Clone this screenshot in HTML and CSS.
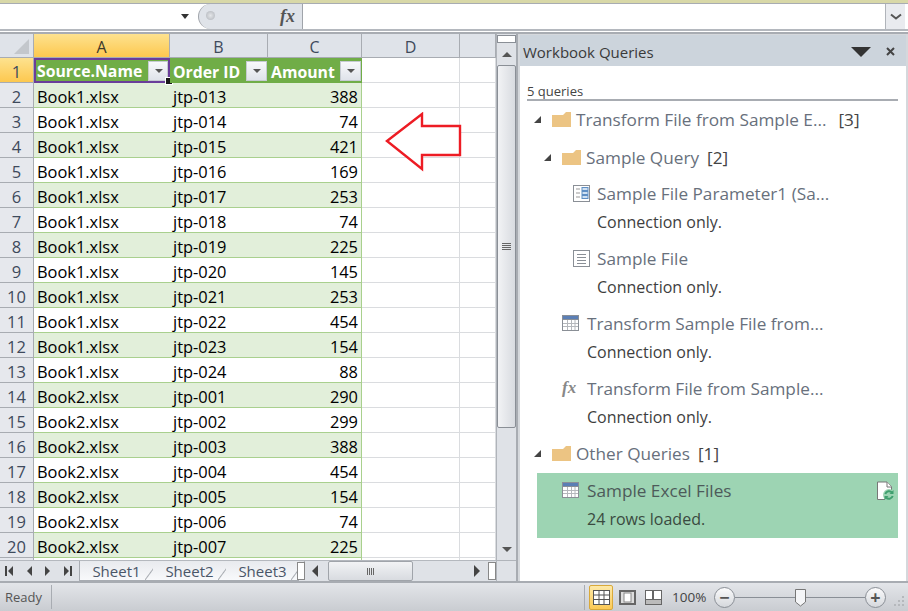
FILE: index.html
```html
<!DOCTYPE html>
<html lang="en">
<head>
  <meta charset="UTF-8">
  <title>Workbook Queries</title>
  <link rel="stylesheet" href="styles.css">
</head>
<body>
  <div class="formula-bar">
    <div class="name-box"><span class="name-arrow"></span></div>
    <div class="fx-box">
      <span class="fx-knob"></span>
      <span class="fx-label">fx</span>
    </div>
    <div class="formula-input"></div>
    <div class="formula-expand">
      <svg width="12" height="8" viewBox="0 0 12 8"><path d="M1 1.5 6 5.5 11 1.5" fill="none" stroke="#555" stroke-width="2"/></svg>
    </div>
  </div>

  <div class="main">
    <div class="sheet-area">
      <div class="sheet-left">
        <div class="grid-wrap">
          <div class="grid" id="grid"></div>
          <svg class="red-arrow" width="78" height="60" viewBox="0 0 78 60">
            <path d="M2 29 37 2V14H75V43H37V57Z" fill="#fff" stroke="#ed1c24" stroke-width="2.4"/>
          </svg>
        </div>
        <div class="tabs-bar">
          <div class="tab-nav">
            <svg width="74" height="12" viewBox="0 0 74 12" fill="#444">
              <path d="M5 1V11H7V1ZM13 1 8 6 13 11Z"/>
              <path d="M32 1 27 6 32 11Z"/>
              <path d="M45 1 50 6 45 11Z"/>
              <path d="M64 1 69 6 64 11ZM70 1V11H72V1Z"/>
            </svg>
          </div>
          <div class="tab">Sheet1</div>
          <div class="tab">Sheet2</div>
          <div class="tab">Sheet3</div>
          <div class="tab-split"></div>
          <div class="hscroll">
            <span class="tri-left"></span>
            <div class="hthumb"><span class="hgrip"></span></div>
            <span class="tri-right"></span>
          </div>
          <div class="tab-split end"></div>
        </div>
      </div>
      <div class="vscroll">
        <div class="splitter"></div>
        <div class="scroll-btn"><span class="tri-up"></span></div>
        <div class="scroll-thumb"><span class="grip"></span></div>
        <div class="scroll-track"></div>
        <div class="scroll-btn down"><span class="tri-down"></span></div>
        <div class="scroll-corner"></div>
      </div>
    </div>

    <aside class="pane">
      <div class="pane-head">
        <span class="pane-title">Workbook Queries</span>
        <span class="pane-menu"></span>
        <svg class="pane-close" width="9" height="9" viewBox="0 0 9 9"><path d="M1 1 8 8M8 1 1 8" stroke="#444" stroke-width="2"/></svg>
      </div>
      <div class="pane-body">
        <div class="count">5 queries</div>

        <div class="group g1">
          <span class="expander"></span>
          <svg class="folder" width="20" height="17" viewBox="0 0 20 17"><path d="M0 4H11L14 1H19V16H0Z" fill="#ecc483"/></svg>
          <span class="q-name">Transform File from Sample E...</span><span class="q-count wide">[3]</span>
        </div>

        <div class="group g2">
          <span class="expander"></span>
          <svg class="folder" width="20" height="17" viewBox="0 0 20 17"><path d="M0 4H11L14 1H19V16H0Z" fill="#ecc483"/></svg>
          <span class="q-name">Sample Query</span><span class="q-count">[2]</span>
        </div>

        <div class="query q-deep first">
          <svg class="q-icon" width="18" height="18" viewBox="0 0 18 18">
            <rect x=".5" y=".5" width="16" height="16" fill="#fff" stroke="#8a8f96"/>
            <path d="M3 4H7M3 8H7M3 12H7" stroke="#999"/>
            <rect x="9" y="2.5" width="6" height="3" fill="#cfe0f2" stroke="#5f8fc4"/>
            <rect x="9" y="6.5" width="6" height="3" fill="#cfe0f2" stroke="#5f8fc4"/>
            <rect x="9" y="10.5" width="6" height="3" fill="#cfe0f2" stroke="#5f8fc4"/>
          </svg>
          <div class="q-text">
            <div class="q-name">Sample File Parameter1 (Sa...</div>
            <div class="q-status">Connection only.</div>
          </div>
        </div>

        <div class="query q-deep">
          <svg class="q-icon" width="18" height="18" viewBox="0 0 18 18">
            <rect x=".5" y=".5" width="16" height="16" fill="#fff" stroke="#8a8f96"/>
            <path d="M4 4.5H13M4 7.5H13M4 10.5H13M4 13.5H13" stroke="#8a8f96"/>
          </svg>
          <div class="q-text">
            <div class="q-name">Sample File</div>
            <div class="q-status">Connection only.</div>
          </div>
        </div>

        <div class="query">
          <svg class="q-icon" width="17" height="16" viewBox="0 0 17 16">
            <rect width="17" height="16" fill="#8a8f96"/>
            <rect x="1" y="1" width="15" height="3" fill="#5b7fb5"/>
            <path d="M1 5H16V15H1Z" fill="#fff"/>
            <path d="M1 8.5H16M1 11.5H16M5.5 5V15M9.5 5V15M13 5V15" stroke="#b5b8bc"/>
          </svg>
          <div class="q-text">
            <div class="q-name">Transform Sample File from...</div>
            <div class="q-status">Connection only.</div>
          </div>
        </div>

        <div class="query">
          <span class="q-icon fx-icon">fx</span>
          <div class="q-text">
            <div class="q-name">Transform File from Sample...</div>
            <div class="q-status">Connection only.</div>
          </div>
        </div>

        <div class="group g1 other">
          <span class="expander"></span>
          <svg class="folder" width="20" height="17" viewBox="0 0 20 17"><path d="M0 4H11L14 1H19V16H0Z" fill="#ecc483"/></svg>
          <span class="q-name">Other Queries</span><span class="q-count">[1]</span>
        </div>

        <div class="query selected">
          <svg class="q-icon" width="17" height="16" viewBox="0 0 17 16">
            <rect width="17" height="16" fill="#8a8f96"/>
            <rect x="1" y="1" width="15" height="3" fill="#5b7fb5"/>
            <path d="M1 5H16V15H1Z" fill="#fff"/>
            <path d="M1 8.5H16M1 11.5H16M5.5 5V15M9.5 5V15M13 5V15" stroke="#b5b8bc"/>
          </svg>
          <div class="q-text">
            <div class="q-name">Sample Excel Files</div>
            <div class="q-status">24 rows loaded.</div>
          </div>
          <svg class="q-load" width="19" height="20" viewBox="0 0 19 20">
            <path d="M1.5 1H11L15.5 5.5V18.5H1.5Z" fill="#fff" stroke="#777"/>
            <path d="M11 1V6H15.5" fill="#fff" stroke="#777"/>
            <circle cx="13" cy="14" r="6" fill="#9dd4b3"/>
            <path d="M9.3 13A4 4 0 0 1 16 11.5M16.7 15A4 4 0 0 1 10 16.5" fill="none" stroke="#3f9f6e" stroke-width="2"/>
            <path d="M17.5 9V13H13.5ZM8.5 19V15H12.5Z" fill="#3f9f6e"/>
          </svg>
        </div>
      </div>
    </aside>
  </div>

  <div class="status-bar">
    <span class="status-ready">Ready</span>
    <div class="status-right">
      <span class="view-btn active">
        <svg width="17" height="15" viewBox="0 0 17 15"><rect width="17" height="15" fill="#555"/><path d="M1 1H16V14H1Z" fill="#fff"/><path d="M1 5H16M1 9.5H16M6 1V14M11 1V14" stroke="#555"/></svg>
      </span>
      <span class="view-btn">
        <svg width="17" height="15" viewBox="0 0 17 15"><rect width="17" height="15" fill="#666"/><rect x="2" y="2" width="13" height="11" fill="#ddd"/><rect x="5" y="3" width="7" height="9" fill="#fff" stroke="#888"/></svg>
      </span>
      <span class="view-btn">
        <svg width="17" height="15" viewBox="0 0 17 15"><rect width="17" height="15" fill="#666"/><rect x="1" y="1" width="6" height="8" fill="#fff"/><rect x="9" y="1" width="7" height="8" fill="#fff"/><rect x="1" y="10" width="15" height="4" fill="#bbb"/></svg>
      </span>
      <span class="zoom-pct">100%</span>
      <span class="zoom-btn">&minus;</span>
      <div class="zoom-track">
        <svg class="zoom-thumb" width="11" height="18" viewBox="0 0 11 18"><path d="M.5.5H10.5V13L5.5 17 .5 13Z" fill="#f4f5f7" stroke="#777"/></svg>
      </div>
      <span class="zoom-btn">+</span>
      <svg class="resize-grip" width="12" height="12" viewBox="0 0 12 12" fill="#b5b8bc"><path d="M9 1h2v2H9zM5 5h2v2H5zM9 5h2v2H9zM1 9h2v2H1zM5 9h2v2H5zM9 9h2v2H9z"/></svg>
    </div>
  </div>

  <script>
    const files = ['Book1.xlsx', 'Book2.xlsx'];
    const rows = [
      [0, 13, 388], [0, 14, 74], [0, 15, 421], [0, 16, 169], [0, 17, 253], [0, 18, 74],
      [0, 19, 225], [0, 20, 145], [0, 21, 253], [0, 22, 454], [0, 23, 154], [0, 24, 88],
      [1, 1, 290], [1, 2, 299], [1, 3, 388], [1, 4, 454], [1, 5, 154], [1, 6, 74], [1, 7, 225]
    ];
    const grid = document.getElementById('grid');

    function addCell(cls, text) {
      const cell = document.createElement('div');
      cell.className = cls;
      if (text !== undefined) cell.textContent = text;
      grid.appendChild(cell);
      return cell;
    }

    addCell('corner').innerHTML = '<span class="corner-tri"></span>';
    addCell('col-head on', 'A');
    addCell('col-head', 'B');
    addCell('col-head', 'C');
    addCell('col-head', 'D');
    addCell('col-head');

    addCell('row-head on', '1');
    ['Source.Name', 'Order ID', 'Amount'].forEach((name, i) => {
      const cell = addCell(i === 0 ? 'th active' : 'th', name);
      const btn = document.createElement('span');
      btn.className = 'filter';
      cell.appendChild(btn);
    });
    addCell('cell');
    addCell('cell');

    rows.forEach((row, i) => {
      const band = i % 2 === 0 ? ' band' : '';
      addCell('row-head', i + 2);
      addCell('cell t' + band, files[row[0]]);
      addCell('cell t' + band, 'jtp-' + String(row[1]).padStart(3, '0'));
      addCell('cell t num' + band, row[2]);
      addCell('cell');
      addCell('cell');
    });

    addCell('row-head');
    addCell('cell t');
    addCell('cell t');
    addCell('cell t num');
    addCell('cell');
    addCell('cell');
  </script>
</body>
</html>
```

FILE: styles.css
```css
* {
  box-sizing: border-box;
}

html, body {
  margin: 0;
  height: 100%;
  overflow: hidden;
}

body {
  width: 908px;
  height: 611px;
  display: flex;
  flex-direction: column;
  font-family: "Open Sans", "Noto Sans", sans-serif;
  background-color: #eef0f3;
  border-top: 3px solid #d8d8a8;
}

/* formula bar */
.formula-bar {
  height: 28px;
  display: flex;
  background-color: #fff;
  border-top: 1px solid #a8acb2;
  border-bottom: 2px solid #b4b8be;
  flex-shrink: 0;
}

.name-box {
  width: 198px;
  position: relative;
  background-color: #fff;
}

.name-arrow {
  position: absolute;
  left: 181px;
  top: 10px;
  border-left: 4px solid transparent;
  border-right: 4px solid transparent;
  border-top: 5px solid #333;
}

.fx-box {
  width: 105px;
  position: relative;
  background-color: #dfe3e9;
  border-left: 1px solid #a0a4aa;
  border-right: 1px solid #a0a4aa;
  border-radius: 13px 0 0 13px;
}

.fx-knob {
  position: absolute;
  left: 7px;
  top: 7px;
  width: 9px;
  height: 9px;
  border-radius: 50%;
  background: radial-gradient(#e4e6e9, #aeb2b8);
}

.fx-label {
  position: absolute;
  left: 81px;
  top: 0;
  font-family: "Liberation Serif", serif;
  font-style: italic;
  font-weight: bold;
  font-size: 18px;
  line-height: 24px;
  color: #555;
}

.formula-input {
  flex: 1;
}

.formula-expand {
  width: 20px;
  display: flex;
  align-items: center;
  justify-content: center;
  background-color: #e9ebef;
  border-left: 1px solid #b0b4ba;
  margin-right: 3px;
}

/* sheet and pane */
.main {
  flex: 1;
  min-height: 0;
  display: flex;
  border-top: 1px solid #fff;
  padding: 2px 0;
  background-color: #a8acb2;
}

.sheet-area {
  width: 518px;
  display: flex;
  border-right: 2px solid #a8acb2;
  background-color: #fff;
}

.sheet-left {
  width: 496px;
  display: flex;
  flex-direction: column;
}

.grid-wrap {
  flex: 1;
  min-height: 0;
  position: relative;
  overflow: hidden;
}

.grid {
  display: grid;
  grid-template-columns: 34px 136px 98px 94px 98px 36px;
  grid-template-rows: 24px repeat(21, 25px);
  font-size: 16.4px;
  color: #000;
}

.red-arrow {
  position: absolute;
  left: 385px;
  top: 78px;
}

.corner {
  background-color: #dfe3e9;
  border-right: 1px solid #a8acb2;
  border-bottom: 1px solid #a8acb2;
  position: relative;
}

.corner-tri {
  position: absolute;
  right: 4px;
  bottom: 3px;
  border-left: 15px solid transparent;
  border-bottom: 15px solid #c3c7cc;
}

.col-head {
  background-color: #dfe3e9;
  border-right: 1px solid #a8acb2;
  border-bottom: 1px solid #a8acb2;
  display: flex;
  align-items: center;
  justify-content: center;
  padding-top: 2px;
  font-size: 16px;
  color: #3e4a5c;
}

.col-head.on {
  background: linear-gradient(#fde28f, #fdc84f);
  color: #3e3a2c;
}

.row-head {
  background-color: #e6e8ed;
  border-right: 1px solid #a8acb2;
  border-bottom: 1px solid #a8acb2;
  display: flex;
  align-items: center;
  justify-content: center;
  padding-top: 2px;
  font-size: 16.5px;
  color: #3e4a5c;
}

.row-head.on {
  background: linear-gradient(#fde28f, #fdc84f);
}

.th {
  background-color: #70ad47;
  color: #fff;
  font-weight: bold;
  font-size: 15.8px;
  padding: 2px 0 0 3px;
  display: flex;
  align-items: center;
  position: relative;
  white-space: nowrap;
}

.th.active {
  outline: 2px solid #6a3d9a;
  outline-offset: -2px;
  border-bottom: 2px solid #2a1a3a;
}

.th.active::after {
  content: "";
  position: absolute;
  right: -3px;
  bottom: -4px;
  width: 6px;
  height: 6px;
  background-color: #1a1a1a;
  border: 1px solid #fff;
}

.filter {
  position: absolute;
  right: 1px;
  top: 3px;
  width: 21px;
  height: 20px;
  background: linear-gradient(#f8f9fb, #dfe3ea);
  border: 1px solid #c6cbd2;
}

.th.active .filter {
  right: 2px;
  width: 20px;
}

.filter::after {
  content: "";
  position: absolute;
  left: 6px;
  top: 7px;
  border-left: 4px solid transparent;
  border-right: 4px solid transparent;
  border-top: 4px solid #555;
}

.cell {
  border-right: 1px solid #dadcdf;
  border-bottom: 1px solid #dadcdf;
  background-color: #fff;
}

.cell.t {
  padding: 0 3px;
  line-height: 27px;
  border-right: 0;
  border-bottom: 1px solid #a9d08e;
  white-space: nowrap;
}

.cell.band {
  background-color: #e2efda;
}

.cell.num {
  text-align: right;
  border-right: 1px solid #a9d08e;
}

/* vertical scrollbar between grid and pane */
.vscroll {
  width: 20px;
  display: flex;
  flex-direction: column;
  background-color: #dfe2e7;
  border-left: 1px solid #b0b4ba;
}

.splitter {
  height: 8px;
  margin: 1px 0 0;
  background-color: #fff;
  border: 1px solid #8a8f96;
}

.scroll-btn {
  height: 22px;
  display: flex;
  align-items: center;
  justify-content: center;
}

.tri-up {
  border-left: 5px solid transparent;
  border-right: 5px solid transparent;
  border-bottom: 5px solid #555;
}

.tri-down {
  border-left: 5px solid transparent;
  border-right: 5px solid transparent;
  border-top: 5px solid #555;
}

.scroll-thumb {
  height: 363px;
  background: linear-gradient(90deg, #f2f3f5, #d8dbe0);
  border: 1px solid #8a8f96;
  border-radius: 2px;
  display: flex;
  align-items: center;
  justify-content: center;
}

.grip {
  width: 9px;
  height: 7px;
  background: repeating-linear-gradient(#666 0 1px, transparent 1px 2px);
}

.scroll-track {
  flex: 1;
}

.scroll-corner {
  height: 21px;
  border-top: 1px solid #b0b4ba;
}

/* sheet tabs */
.tabs-bar {
  height: 21px;
  display: flex;
  align-items: stretch;
  background-color: #dfe2e7;
  border-top: 1px solid #b4b8be;
  flex-shrink: 0;
}

.tab-nav {
  width: 80px;
  display: flex;
  align-items: center;
  border-right: 1px solid #a8acb2;
}

.tab {
  width: 73px;
  position: relative;
  display: flex;
  align-items: center;
  justify-content: center;
  font-size: 15px;
  color: #4a5668;
  background: linear-gradient(#e8eaee, #f8f9fb);
  border-bottom: 1px solid #a8acb2;
}

.tab::after {
  content: "";
  position: absolute;
  right: -6px;
  top: 0;
  width: 14px;
  height: 100%;
  background: linear-gradient(to bottom right, transparent calc(50% - 1px), #a8acb2 50%, transparent calc(50% + 1px));
}

.tab-split {
  width: 8px;
  margin: 1px 0;
  margin-left: -2px;
  background-color: #fff;
  border: 1px solid #888;
  position: relative;
}

.tab-split.end {
  margin-left: 0;
}

.hscroll {
  width: 183px;
  display: flex;
  align-items: center;
  padding: 0 8px 0 7px;
}

.tri-left {
  border-top: 6px solid transparent;
  border-bottom: 6px solid transparent;
  border-right: 6px solid #444;
}

.tri-right {
  margin-left: auto;
  border-top: 6px solid transparent;
  border-bottom: 6px solid transparent;
  border-left: 6px solid #444;
}

.hthumb {
  width: 85px;
  height: 20px;
  margin-left: 10px;
  background: linear-gradient(#f2f3f5, #d8dbe0);
  border: 1px solid #a0a4aa;
  border-radius: 2px;
  display: flex;
  align-items: center;
  justify-content: center;
}

.hgrip {
  width: 7px;
  height: 7px;
  background: repeating-linear-gradient(90deg, #666 0 1px, transparent 1px 2px);
}

/* workbook queries pane */
.pane {
  flex: 1;
  display: flex;
  flex-direction: column;
  padding: 1px 2px 0 2px;
  background-color: #d5d8dc;
}

.pane-head {
  height: 31px;
  display: flex;
  align-items: center;
  padding: 2px 11px 0 3px;
  background-color: #ccd4dc;
  flex-shrink: 0;
}

.pane-title {
  flex: 1;
  font-size: 15px;
  color: #3a3a3a;
}

.pane-menu {
  border-left: 10px solid transparent;
  border-right: 10px solid transparent;
  border-top: 10px solid #333;
  margin-right: 15px;
}

.pane-body {
  flex: 1;
  background-color: #fff;
  padding: 16px 8px 0 7px;
  color: #5b6470;
}

.count {
  font-size: 13px;
  color: #444;
  height: 19px;
  line-height: 18px;
  border-bottom: 2px solid #a8acb2;
}

.group {
  display: flex;
  align-items: center;
  height: 25px;
  font-size: 17.2px;
}

.group.g1 {
  margin-top: 6px;
  padding-left: 7px;
}

.group.g2 {
  margin-top: 13px;
  padding-left: 17px;
}

.group.other {
  margin-top: 12px;
}

.expander {
  width: 0;
  height: 0;
  margin-right: 11px;
  border-left: 7px solid transparent;
  border-bottom: 7px solid #444;
}

.folder {
  margin-right: 4px;
}

.q-count {
  margin-left: 8px;
  color: #444;
}

.q-count.wide {
  margin-left: 12px;
}

.query {
  display: flex;
  padding-left: 35px;
  margin-top: 11px;
  height: 54px;
  position: relative;
}

.query.first {
  margin-top: 10px;
}

.query.q-deep {
  padding-left: 46px;
}

.q-icon {
  margin: 5px 8px 0 0;
  flex-shrink: 0;
}

.q-deep .q-icon {
  margin-right: 6px;
}

.q-text {
  line-height: 28px;
}

.q-name {
  font-size: 17.2px;
  white-space: nowrap;
  color: #68707c;
}

.q-status {
  font-size: 16px;
  color: #3e3e3e;
}

.fx-icon {
  width: 17px;
  height: 18px;
  font-family: "Liberation Serif", serif;
  font-style: italic;
  font-weight: bold;
  font-size: 17px;
  line-height: 16px;
  color: #888;
}

.selected {
  margin: 7px 0 0 10px;
  padding-left: 25px;
  height: 65px;
  padding-top: 4px;
  background-color: #9dd4b3;
}

.selected .q-name {
  color: #4d5a5a;
}

.selected .q-status {
  color: #3a4a40;
}

.q-load {
  position: absolute;
  right: 3px;
  top: 8px;
}

/* status bar */
.status-bar {
  height: 28px;
  flex-shrink: 0;
  display: flex;
  align-items: center;
  justify-content: space-between;
  background: linear-gradient(#e3e5e9, #c9ccd1);
  font-size: 13px;
  color: #555;
}

.status-ready {
  width: 52px;
  padding-left: 5px;
  border-right: 1px solid #a8acb2;
  line-height: 24px;
}

.status-right {
  display: flex;
  align-items: center;
  border-left: 1px solid #a8acb2;
  padding-left: 4px;
}

.view-btn {
  width: 24px;
  height: 25px;
  margin-right: 2px;
  display: flex;
  align-items: center;
  justify-content: center;
}

.view-btn.active {
  background: linear-gradient(#fde9a8, #fcc955);
  border: 1px solid #d9a93a;
  border-radius: 2px;
}

.zoom-pct {
  width: 42px;
  margin-left: 5px;
  font-size: 13.5px;
  color: #444;
}

.zoom-btn {
  width: 21px;
  height: 21px;
  display: flex;
  align-items: center;
  justify-content: center;
  border: 1px solid #8a8f96;
  border-radius: 50%;
  background: linear-gradient(#fbfbfc, #d5d8dc);
  font-size: 18px;
  font-weight: bold;
  line-height: 1;
  color: #555;
}

.zoom-track {
  width: 130px;
  height: 1px;
  background-color: #8a8f96;
  position: relative;
}

.zoom-thumb {
  position: absolute;
  left: 60px;
  top: -8px;
}

.resize-grip {
  margin: 8px 3px 0 7px;
}
```
